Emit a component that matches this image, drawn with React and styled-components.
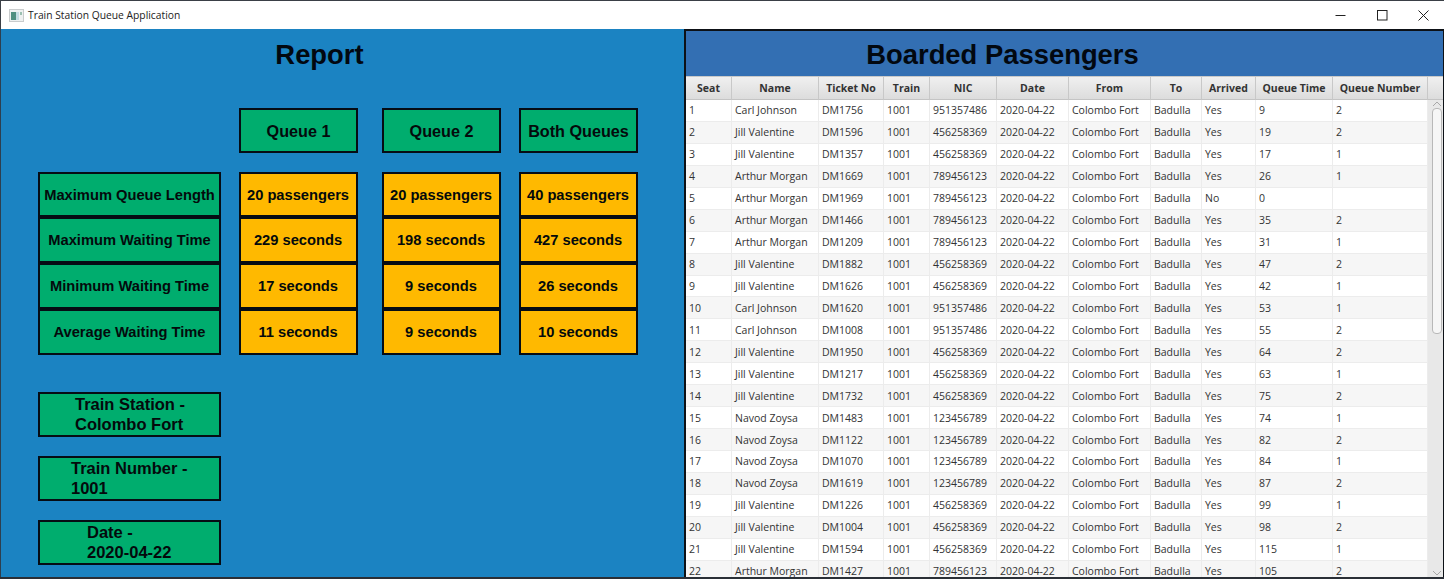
import React from 'react';
import styled, { createGlobalStyle } from 'styled-components';

const Global = createGlobalStyle`
  html, body { margin: 0; padding: 0; background: #1b83c2; overflow: hidden; }
  * { box-sizing: border-box; }
`;

const Win = styled.div`
  width: 1444px; height: 579px; display: flex; flex-direction: column; overflow: hidden;
  background: #1b83c2; border-bottom: 2px solid #2a2f36;
`;
const TitleBar = styled.div`
  height: 29px; flex: none; background: #fff; display: flex; align-items: center; padding-left: 8px;
  border-top: 1px solid #3a3f46; border-left: 1px solid #3a3f46;
  font: 400 10.3px "Open Sans", sans-serif; color: #222;
`;
const TitleText = styled.span` margin-left: 4px; flex: 1; `;
const WinBtn = styled.div`
  width: 42px; height: 28px; display: flex; align-items: center; justify-content: center;
  &:last-child { width: 41px; }
`;
const Body = styled.div` flex: 1; display: flex; min-height: 0; `;
const Left = styled.div`
  width: 684px; flex: none; background: #1b83c2; padding: 0 0 0 37px; display: flex; flex-direction: column;
  border-left: 1px solid #2d3f4f;
`;
const Title = styled.h1`
  margin: 0; font: 700 27.4px "Liberation Sans", sans-serif; color: #020810; text-align: center;
`;
const ReportTitle = styled(Title)`
  height: 79px; padding-top: 10px; width: 563px; line-height: 32px;
`;
const Grid = styled.div` display: flex; height: 247px; flex: none; `;
const Column = styled.div`
  width: ${p => p.$w}px; margin-right: ${p => p.$gap}px; display: flex; flex-direction: column;
`;
const Box = styled.div`
  height: ${p => p.$h || 46}px; flex: none; border: 2px solid #060c14;
  padding-right: ${p => (p.$amber ? 1 : 0)}px;
  background: ${p => (p.$amber ? '#ffb900' : '#00ad6e')};
  display: flex; align-items: center; justify-content: center; text-align: center;
  font: 700 14.7px/20px "Liberation Sans", sans-serif; color: #040a0c; white-space: nowrap;
`;
const HeadBox = styled(Box)` font-size: 16.2px; padding-top: 1px; `;
const Spacer = styled.div` height: ${p => p.$h}px; flex: none; `;
const Info = styled.div` margin-top: 37px; display: flex; flex-direction: column; gap: 19px; width: 183px; `;
const InfoBox = styled(Box)`
  font-size: 16.5px; line-height: 20px; justify-content: flex-start; text-align: left;
  padding-left: ${p => p.$pad}px; padding-bottom: 2px;
`;
const Right = styled.div`
  flex: 1; min-width: 0; display: flex; flex-direction: column; border: 2px solid #0d1116; border-bottom: 0; border-right: 1px solid #0d1116; background: #fff;
`;
const BoardTitle = styled(Title)`
  height: 45px; flex: none; background: #336fb3; line-height: 47px; padding-right: 124px;
`;
const Table = styled.div` flex: 1; min-height: 0; display: flex; overflow: hidden; `;
const Main = styled.div` width: 742px; flex: none; overflow: hidden; `;
const Head = styled.div`
  display: grid; grid-template-columns: ${p => p.$cols}; height: 24px; width: 742px;
`;
const HeadCell = styled.div`
  background: linear-gradient(#f0f0f0, #dcdcdc); border-right: 1px solid #c8c8c8; border-top: 1px solid #c9c9c9; border-bottom: 1px solid #c4c4c4;
  display: flex; align-items: center; justify-content: center;
  font: 700 10.5px "Open Sans", sans-serif; color: #333; white-space: nowrap;
`;
const Row = styled.div`
  display: grid; grid-template-columns: ${p => p.$cols}; height: 21.95px; width: 742px;
  background: ${p => (p.$odd ? '#fff' : '#f6f6f6')}; border-bottom: 1px solid #ececec;
`;
const Cell = styled.div`
  padding-left: 3px; border-right: 1px solid #ececec; display: flex; align-items: center;
  font: 400 10.5px "Open Sans", sans-serif; color: #333; white-space: nowrap; overflow: hidden;
`;
const ScrollCol = styled.div` flex: 1; display: flex; flex-direction: column; `;
const HeadFill = styled(HeadCell)` height: 24px; flex: none; border-right: 0; `;
const Track = styled.div`
  flex: 1; background: #e8e8e8; display: flex; flex-direction: column; align-items: center; padding-left: 2px;
`;
const Arrow = styled.svg` width: 10px; height: 8px; flex: none; margin: 0; `;
const Thumb = styled.div`
  width: 10px; height: 226px; flex: none; background: #f6f6f6; border: 1px solid #b8b8b8; border-radius: 4px;
`;
const TrackRest = styled.div` flex: 1; `;

const widths = [46, 87, 65, 46, 67, 72, 82, 51, 54, 77, 95];
const cols = widths.map(w => `${w}px`).join(' ');
const headers = ['Seat', 'Name', 'Ticket No', 'Train', 'NIC', 'Date', 'From', 'To', 'Arrived', 'Queue Time', 'Queue Number'];

const CJ = ['Carl Johnson', '951357486'];
const JV = ['Jill Valentine', '456258369'];
const AM = ['Arthur Morgan', '789456123'];
const NZ = ['Navod Zoysa', '123456789'];
const data = [
  [CJ, 'DM1756', 'Yes', '9', '2'], [JV, 'DM1596', 'Yes', '19', '2'], [JV, 'DM1357', 'Yes', '17', '1'],
  [AM, 'DM1669', 'Yes', '26', '1'], [AM, 'DM1969', 'No', '0', ''], [AM, 'DM1466', 'Yes', '35', '2'],
  [AM, 'DM1209', 'Yes', '31', '1'], [JV, 'DM1882', 'Yes', '47', '2'], [JV, 'DM1626', 'Yes', '42', '1'],
  [CJ, 'DM1620', 'Yes', '53', '1'], [CJ, 'DM1008', 'Yes', '55', '2'], [JV, 'DM1950', 'Yes', '64', '2'],
  [JV, 'DM1217', 'Yes', '63', '1'], [JV, 'DM1732', 'Yes', '75', '2'], [NZ, 'DM1483', 'Yes', '74', '1'],
  [NZ, 'DM1122', 'Yes', '82', '2'], [NZ, 'DM1070', 'Yes', '84', '1'], [NZ, 'DM1619', 'Yes', '87', '2'],
  [JV, 'DM1226', 'Yes', '99', '1'], [JV, 'DM1004', 'Yes', '98', '2'], [JV, 'DM1594', 'Yes', '115', '1'],
  [AM, 'DM1427', 'Yes', '105', '2'],
];

const columns = [
  { w: 183, gap: 18, head: null, amber: false, items: ['Maximum Queue Length', 'Maximum Waiting Time', 'Minimum Waiting Time', 'Average Waiting Time'] },
  { w: 119, gap: 24, head: 'Queue 1', amber: true, items: ['20 passengers', '229 seconds', '17 seconds', '11 seconds'] },
  { w: 119, gap: 18, head: 'Queue 2', amber: true, items: ['20 passengers', '198 seconds', '9 seconds', '9 seconds'] },
  { w: 119, gap: 0, head: 'Both Queues', amber: true, items: ['40 passengers', '427 seconds', '26 seconds', '10 seconds'] },
];

export default function App() {
  return (
    <Win>
      <Global />
      <TitleBar>
        <svg width="15" height="13" viewBox="0 0 15 13">
          <rect x="0.5" y="0.5" width="14" height="12" fill="#eef1f1" stroke="#c9cccd" />
          <rect x="2" y="3" width="5" height="8" fill="#4f8f80" />
          <rect x="7" y="3" width="3" height="8" fill="#c3dce2" />
          <rect x="11" y="3" width="2" height="3" fill="#9cc0b2" />
        </svg>
        <TitleText>Train Station Queue Application</TitleText>
        <WinBtn><svg width="11" height="11"><path d="M0.5 5.5H10.5" stroke="#222" /></svg></WinBtn>
        <WinBtn><svg width="11" height="11"><rect x="0.5" y="0.5" width="9.5" height="9.5" fill="none" stroke="#222" /></svg></WinBtn>
        <WinBtn><svg width="11" height="11"><path d="M0.5 0.5L10.5 10.5M10.5 0.5L0.5 10.5" stroke="#222" /></svg></WinBtn>
      </TitleBar>
      <Body>
        <Left>
          <ReportTitle>Report</ReportTitle>
          <Grid>
            {columns.map((c, i) => (
              <Column key={i} $w={c.w} $gap={c.gap}>
                {c.head ? <HeadBox $h={45}>{c.head}</HeadBox> : null}
                <Spacer $h={c.head ? 19 : 64} />
                {c.items.map((t, k) => <Box key={t} $h={k === 0 ? 45 : 46} $amber={c.amber}>{t}</Box>)}
              </Column>
            ))}
          </Grid>
          <Info>
            <InfoBox $h={45} $pad={35}><span>Train Station -<br />Colombo Fort</span></InfoBox>
            <InfoBox $h={45} $pad={31}><span>Train Number -<br />1001</span></InfoBox>
            <InfoBox $h={45} $pad={47}><span>Date -<br />2020-04-22</span></InfoBox>
          </Info>
        </Left>
        <Right>
          <BoardTitle>Boarded Passengers</BoardTitle>
          <Table>
            <Main>
              <Head $cols={cols}>
                {headers.map(h => <HeadCell key={h}>{h}</HeadCell>)}
              </Head>
              {data.map(([p, ticket, arrived, time, num], i) => (
                <Row key={i} $cols={cols} $odd={i % 2 === 0}>
                  {[i + 1, p[0], ticket, '1001', p[1], '2020-04-22', 'Colombo Fort', 'Badulla', arrived, time, num].map((v, j) => (
                    <Cell key={j}>{v}</Cell>
                  ))}
                </Row>
              ))}
            </Main>
            <ScrollCol>
              <HeadFill />
              <Track>
                <Arrow viewBox="0 0 10 8"><path d="M1 6L5 2L9 6" fill="none" stroke="#a8a8a8" /></Arrow>
                <Thumb />
                <TrackRest />
                <Arrow viewBox="0 0 10 8"><path d="M1 2L5 6L9 2" fill="none" stroke="#a8a8a8" /></Arrow>
              </Track>
            </ScrollCol>
          </Table>
        </Right>
      </Body>
    </Win>
  );
}
